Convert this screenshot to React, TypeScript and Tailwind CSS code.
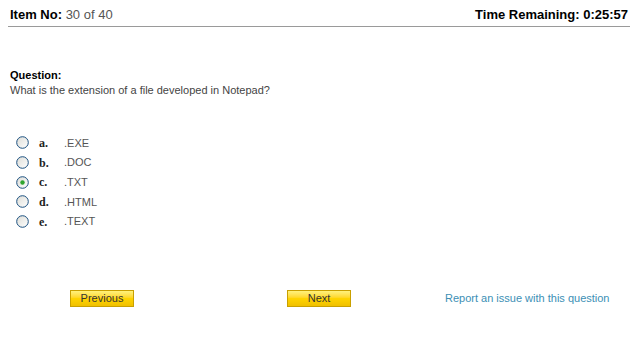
import React from "react";

const options = [
  { k: "a.", v: ".EXE" },
  { k: "b.", v: ".DOC" },
  { k: "c.", v: ".TXT", checked: true },
  { k: "d.", v: ".HTML" },
  { k: "e.", v: ".TEXT" },
];

function Radio({ checked }: { checked?: boolean }) {
  return (
    <svg width="13" height="13" viewBox="0 0 13 13">
      <defs>
        <linearGradient id="rg" x1="0" y1="0" x2="1" y2="1">
          <stop offset="0" stopColor="#dcdcd6" />
          <stop offset="1" stopColor="#ffffff" />
        </linearGradient>
      </defs>
      <circle cx="6.5" cy="6.5" r="5.8" fill="url(#rg)" stroke="#1c5180" strokeWidth="1" />
      {checked && <circle cx="6.5" cy="6.5" r="2.2" fill="#2fa52f" />}
    </svg>
  );
}

export default function App() {
  return (
    <div
      className="w-[640px] h-[348px] bg-white text-black"
      style={{ fontFamily: '"Liberation Sans", Arial, sans-serif' }}
    >
      <div className="mx-[8px] w-[622px] pt-[7px] border-b border-[#9a9a9a]">
        <div className="flex justify-between items-start h-[19px] px-[2px] text-[13px] leading-[15px]">
          <div>
            <span className="font-bold">Item No:</span>{" "}
            <span className="text-[#555]">30 of 40</span>
          </div>
          <div className="font-bold">Time Remaining: 0:25:57</div>
        </div>
      </div>

      <div className="pl-[10px] pt-[42px] text-[11px] leading-[13px]">
        <div className="font-bold">Question:</div>
        <div className="mt-[2px] text-[#444]">What is the extension of a file developed in Notepad?</div>
      </div>

      <div className="pl-[16px] pt-[36px] flex flex-col">
        {options.map((o) => (
          <div key={o.k} className="flex items-center h-[19.7px]">
            <Radio checked={o.checked} />
            <span
              className="ml-[10px] w-[25px] font-bold text-[12px] text-[#222]"
              style={{ fontFamily: '"Liberation Serif", "Times New Roman", serif' }}
            >
              {o.k}
            </span>
            <span className="text-[11px] text-[#555]">{o.v}</span>
          </div>
        ))}
      </div>

      <div className="flex items-center pt-[67px] h-[52px]">
        <button className="ml-[70px] w-[64px] h-[17px] border border-[#c9a000] bg-gradient-to-b from-[#fff27a] via-[#ffd400] to-[#f0c000] text-[11px] leading-[15px] text-[#333]">
          Previous
        </button>
        <button className="ml-[153px] w-[64px] h-[17px] border border-[#c9a000] bg-gradient-to-b from-[#fff27a] via-[#ffd400] to-[#f0c000] text-[11px] leading-[15px] text-[#333]">
          Next
        </button>
        <a className="ml-[94px] text-[11px] text-[#3c8fb5]">Report an issue with this question</a>
      </div>
    </div>
  );
}
